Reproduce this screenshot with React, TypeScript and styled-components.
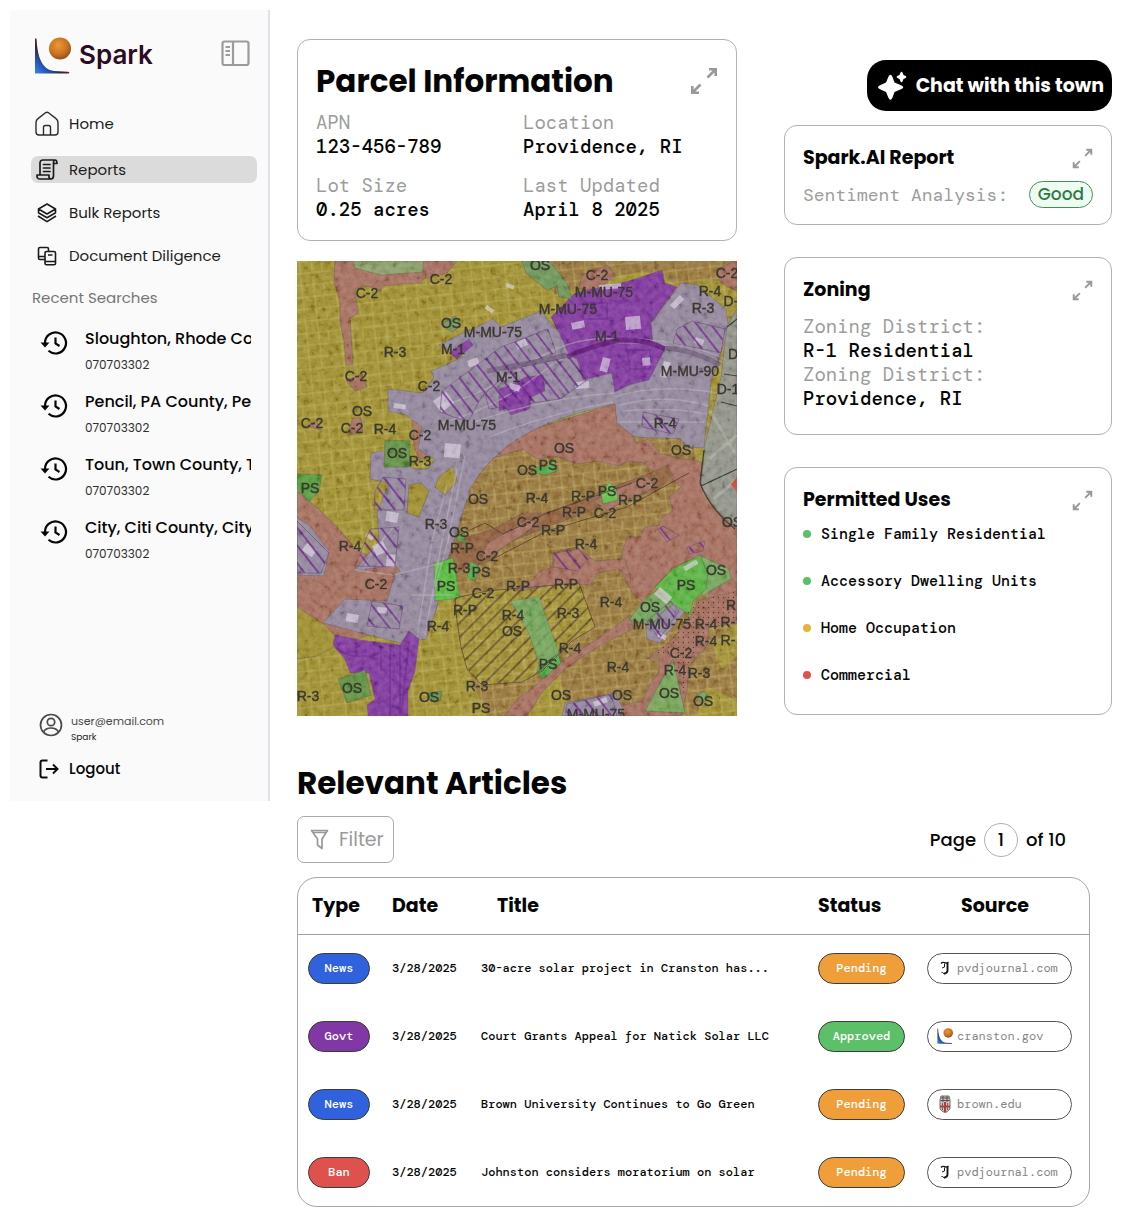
import React from "react";
import styled, { createGlobalStyle } from "styled-components";

const sans = `Poppins, Inter, sans-serif`;
const mono = `"DM Mono", "DejaVu Sans Mono", monospace`;

const GlobalStyle = createGlobalStyle`
  *, *::before, *::after { box-sizing: border-box; }
  body { margin: 0; background: #fff; color: #050505; font-family: ${sans}; }
  h1, h2, p, ul, dl, dd { margin: 0; padding: 0; }
  ul { list-style: none; }
  button { font: inherit; color: inherit; background: none; border: 0; padding: 0; cursor: pointer; }
  a { color: inherit; text-decoration: none; }
  svg { display: block; flex-shrink: 0; }
`;

const Page = styled.div`
  display: grid;
  grid-template-columns: 260px minmax(0, 1fr);
  align-items: start;
  column-gap: 27px;
  padding: 10px 18px 16px 10px;
`;

/* ---------- Sidebar ---------- */

const Sidebar = styled.aside`
  background: #fafafa;
  border-right: 2px solid #e2e1ea;
  padding: 26px 11px 20px 21px;
`;

const Brand = styled.div`
  display: flex;
  align-items: flex-start;
  justify-content: space-between;
  height: 38px;
  padding: 0 7px 0 3px;
`;

const BrandLink = styled.a`
  display: flex;
  align-items: center;
  gap: 8px;
  font: 600 26px/38px Inter, sans-serif;
  color: #2c0b24;
`;

const ToggleButton = styled.button`
  padding-top: 4px;
`;

const NavList = styled.ul`
  display: grid;
  gap: 16px;
  margin-top: 33px;
`;

const NavLink = styled.a<{ $active?: boolean; $tall?: boolean }>`
  display: flex;
  align-items: center;
  gap: 10px;
  height: ${(p) => (p.$tall ? 33 : 27)}px;
  padding-left: 4px;
  border-radius: 7px;
  background: ${(p) => (p.$active ? "#dbdbdb" : "transparent")};
  font-size: 15px;
  line-height: 24px;
  color: #1c1c1c;
`;

const IconSlot = styled.span`
  display: flex;
  justify-content: center;
  width: 24px;
`;

const RecentHeading = styled.h2`
  margin-top: 17px;
  padding-left: 1px;
  font-size: 15px;
  font-weight: 400;
  line-height: 24px;
  color: #757575;
`;

const RecentList = styled.ul`
  display: grid;
  gap: 19px;
  margin-top: 19px;
`;

const RecentLink = styled.a`
  display: flex;
  align-items: flex-start;
  gap: 17px;
  padding: 0 6px 0 9px;
`;

const RecentText = styled.span`
  display: grid;
  gap: 8px;
  min-width: 0;
`;

const RecentTitle = styled.span`
  overflow: hidden;
  white-space: nowrap;
  font-size: 16px;
  font-weight: 500;
  line-height: 20px;
`;

const RecentNumber = styled.span`
  font-size: 12px;
  line-height: 16px;
  color: #303030;
`;

const SidebarFooter = styled.div`
  display: grid;
  gap: 12px;
  margin-top: 151px;
  padding-left: 8px;
`;

const Account = styled.div`
  display: flex;
  align-items: flex-start;
  gap: 8px;
`;

const AccountText = styled.div<{ $small?: boolean }>`
  font-size: ${(p) => (p.$small ? 9 : 11)}px;
  line-height: 16px;
  color: ${(p) => (p.$small ? "#222" : "#484848")};
`;

const Logout = styled.button`
  display: flex;
  align-items: center;
  gap: 10px;
  font-size: 15px;
  font-weight: 500;
  line-height: 24px;
`;

/* ---------- Main panels ---------- */

const Main = styled.main`
  padding-top: 29px;
`;

const TopGrid = styled.section`
  display: grid;
  grid-template-columns: minmax(0, 440fr) minmax(0, 328fr);
  align-items: start;
  column-gap: 47px;
`;

const ParcelColumn = styled.div`
  display: grid;
  gap: 20px;
`;

const SideColumn = styled.div`
  display: flex;
  flex-direction: column;
  gap: 32px;
  padding-top: 21px;
`;

const ReportGroup = styled.div`
  display: flex;
  flex-direction: column;
  gap: 14px;
`;

const Card = styled.section<{ $bottom: number }>`
  border: 1px solid #b2b2b2;
  border-radius: 13px;
  padding: 18px 18px ${(p) => p.$bottom}px;
`;

const CardHead = styled.div<{ $large?: boolean }>`
  display: flex;
  align-items: center;
  justify-content: space-between;
  padding-top: ${(p) => (p.$large ? 3 : 0)}px;
`;

const BigTitle = styled.h1`
  font-size: 31px;
  font-weight: 700;
  line-height: 40px;
`;

const CardTitle = styled.h2`
  font-size: 19px;
  font-weight: 700;
  line-height: 28px;
`;

const Facts = styled.dl`
  display: grid;
  grid-template-columns: 1fr 1fr;
  gap: 15px 12px;
  margin-top: 10px;
`;

const Fact = styled.div`
  font: 400 19px/24px ${mono};
`;

const Label = styled.dt`
  color: #9c9c9c;
`;

const Value = styled.dd`
  font-weight: 500;
`;

const ZoningFacts = styled.dl`
  margin-top: 11px;
  font: 400 19px/24px ${mono};
`;

const Sentiment = styled.div`
  display: flex;
  align-items: center;
  justify-content: space-between;
  margin-top: 9px;
  font: 400 18px/26px ${mono};
  color: #9c9c9c;
`;

const Good = styled.span`
  border: 1px solid #3d9157;
  border-radius: 14px;
  padding: 0 8px;
  background: #effcf2;
  color: #2c7c43;
  font: 500 17px/25px ${sans};
`;

const ChatButton = styled.button`
  align-self: flex-end;
  display: flex;
  align-items: center;
  gap: 9px;
  height: 51px;
  padding: 0 8px 0 10px;
  border-radius: 19px;
  background: #000;
  color: #fff;
  font-size: 19px;
  font-weight: 700;
  white-space: nowrap;
`;

const UseList = styled.ul`
  display: grid;
  gap: 27px;
  margin-top: 10px;
`;

const Use = styled.li<{ $dot: string }>`
  display: flex;
  align-items: center;
  gap: 10px;
  font: 500 15px/20px ${mono};
  white-space: nowrap;
  &::before {
    content: "";
    width: 8px;
    height: 8px;
    border-radius: 50%;
    background: ${(p) => p.$dot};
  }
`;

const MapSvg = styled.svg`
  width: 100%;
  height: auto;
`;

/* ---------- Articles ---------- */

const Articles = styled.section`
  margin-top: 47px;
  padding-right: 22px;
`;

const Toolbar = styled.div`
  display: flex;
  align-items: center;
  justify-content: space-between;
  margin-top: 13px;
  padding-right: 24px;
`;

const FilterButton = styled.button`
  display: flex;
  align-items: center;
  gap: 10px;
  height: 47px;
  padding: 0 9px 0 12px;
  border: 1px solid #aaa;
  border-radius: 7px;
  font-size: 19px;
  color: #9a9a9a;
`;

const Pager = styled.label`
  display: flex;
  align-items: center;
  gap: 8px;
  font-size: 18px;
  font-weight: 500;
`;

const PageInput = styled.input`
  width: 34px;
  height: 34px;
  padding: 0;
  border: 1px solid #b2b2b2;
  border-radius: 50%;
  background: #fff;
  font: inherit;
  color: inherit;
  text-align: center;
`;

const TableFrame = styled.div`
  margin-top: 14px;
  border: 1px solid #a6a6a6;
  border-radius: 20px;
  overflow: hidden;
`;

const Table = styled.table`
  width: 100%;
  table-layout: fixed;
  border-collapse: collapse;
  font: 500 12px/16px ${mono};
  td {
    height: 68px;
    padding: 0 10px;
    white-space: nowrap;
  }
`;

const Col = styled.col<{ $w?: number }>`
  width: ${(p) => (p.$w ? `${p.$w}px` : "auto")};
`;

const Th = styled.th<{ $indent: number }>`
  height: 56px;
  padding: 0 0 0 ${(p) => p.$indent}px;
  border-bottom: 1px solid #a0a0a0;
  font: 700 19px/28px ${sans};
  text-align: left;
`;

const Pill = styled.span<{ $bg: string; $wide?: boolean }>`
  display: flex;
  align-items: center;
  justify-content: center;
  width: ${(p) => (p.$wide ? 87 : 62)}px;
  height: 31px;
  border: 1px solid #3c3c3c;
  border-radius: 16px;
  background: ${(p) => p.$bg};
  color: #fff;
`;

const SourceLink = styled.a`
  display: flex;
  align-items: center;
  gap: 4px;
  width: 145px;
  height: 31px;
  padding-left: 9px;
  border: 1px solid #555;
  border-radius: 16px;
  font-weight: 400;
  color: #858585;
`;

const SourceIcon = styled.span`
  display: flex;
  justify-content: center;
  width: 16px;
`;

/* ---------- Icons ---------- */

const SparkMark = ({ size, id }: { size: number; id: string }) => (
  <svg width={size} height={size} viewBox="0 0 37 37" aria-hidden="true">
    <defs>
      <radialGradient id={`${id}-sun`} cx=".42" cy=".36" r=".65">
        <stop offset="0" stopColor="#e99a37" />
        <stop offset=".6" stopColor="#cb7523" />
        <stop offset="1" stopColor="#955019" />
      </radialGradient>
      <linearGradient id={`${id}-arc`} x1="0" y1="1" x2=".52" y2=".48">
        <stop offset="0" stopColor="#3787f2" />
        <stop offset=".42" stopColor="#2553b0" />
        <stop offset=".75" stopColor="#33243e" />
        <stop offset="1" stopColor="#5c2937" />
      </linearGradient>
    </defs>
    <path d="M1 2C1.500 1 2.500 1 2.700 3C3.500 20 8 32.500 20 34L34 34.800Q36.500 35.500 34.500 36.500H1Z" fill={`url(#${id}-arc)`} />
    <circle cx="26" cy="11.500" r="11" fill={`url(#${id}-sun)`} />
  </svg>
);

const PanelIcon = () => (
  <svg width="29" height="27" viewBox="0 0 29 27" fill="none" stroke="#9b9b9b" strokeWidth="2.200" aria-hidden="true">
    <rect x="1.500" y="1.500" width="26" height="23.500" rx="2" />
    <path d="M12 2V25M4.500 7H9M4.500 11H9M4.500 15H9" />
  </svg>
);

const HomeIcon = () => (
  <svg width="24" height="25" viewBox="0 0 24 25" fill="none" stroke="#2b2b2b" strokeWidth="1.400" strokeLinejoin="round" aria-hidden="true">
    <path d="M1 11.500Q1 9 3 7.600L10.500 1.700Q12 .7 13.500 1.700L21 7.600Q23 9 23 11.500V21Q23 24 20 24H4Q1 24 1 21ZM8.500 24V16.500Q8.500 14.500 10.500 14.500H13.500Q15.500 14.500 15.500 16.500V24" />
  </svg>
);

const ScrollIcon = () => (
  <svg width="22" height="21" viewBox="0 0 22 21" fill="none" stroke="#1b1b1b" strokeWidth="1.700" strokeLinejoin="round" strokeLinecap="round" aria-hidden="true">
    <path d="M4 15.500V4Q4 1 7 1H19Q21 1 21 4.500H18M19 1Q17.500 1 17.500 4V16.500Q17.500 20 15 20H4Q1 20 1 17V16H13V17.500Q13 20 15 20M7.500 5.500H14M7.500 9H14M7.500 12.500H14" />
  </svg>
);

const StackIcon = () => (
  <svg width="20" height="20" viewBox="0 0 20 20" fill="none" stroke="#1b1b1b" strokeWidth="1.600" strokeLinejoin="round" aria-hidden="true">
    <path d="M10 1L18.500 6L10 11L1.500 6ZM1 9.500L10 14.700L19 9.500M1 13L10 18.600L19 13M1.500 6V9.500M18.500 6V9.500" />
  </svg>
);

const DocsIcon = () => (
  <svg width="20" height="20" viewBox="0 0 20 20" fill="none" stroke="#1b1b1b" strokeWidth="1.600" strokeLinejoin="round" aria-hidden="true">
    <path d="M7.500 13.500H3Q1.500 13.500 1.500 12V3Q1.500 1.500 3 1.500H10Q11.500 1.500 11.500 3V5M1.500 10.500H7.500M9.500 5.500H17Q18.500 5.500 18.500 7V17.500Q18.500 18.800 17 18.800H9.500Q8 18.800 8 17.500V7Q8 5.500 9.500 5.500ZM8 15.500H18.500M11 9H15.500" />
  </svg>
);

const HistoryIcon = () => (
  <svg width="28" height="28" viewBox="0 0 28 28" fill="none" stroke="#050505" strokeWidth="2.200" aria-hidden="true">
    <path d="M5 14A10.500 10.500 0 1 1 8.500 21.800M15.500 8.500V14.500L19.500 17" />
    <path d="M0.500 13.500H9.500L5 18.500Z" fill="#050505" stroke="none" />
  </svg>
);

const UserIcon = () => (
  <svg width="24" height="24" viewBox="0 0 24 24" fill="none" stroke="#484848" strokeWidth="1.700" aria-hidden="true">
    <circle cx="12" cy="12" r="10.500" />
    <circle cx="12" cy="9" r="3.700" />
    <path d="M4.500 19C6 16 9 15 12 15S18 16 19.500 19" />
  </svg>
);

const LogoutIcon = () => (
  <svg width="20" height="20" viewBox="0 0 20 20" fill="none" stroke="#0b0b0b" strokeWidth="2" aria-hidden="true">
    <path d="M8.500 1.500H3.500Q1.500 1.500 1.500 3.500V16.500Q1.500 18.500 3.500 18.500H8.500M7 10H18M14 5.500L18.500 10L14 14.500" />
  </svg>
);

const ExpandIcon = ({ size }: { size: number }) => (
  <svg width={size} height={size} viewBox="0 0 28 28" fill="none" stroke="#999" strokeWidth="2.600" aria-hidden="true">
    <path d="M17.500 10.500L25 3M19 2.300H25.700V9M10.500 17.500L3 25M2.300 19V25.700H9" />
  </svg>
);

const SparkleIcon = () => (
  <svg width="30" height="30" viewBox="0 0 30 30" fill="#fff" aria-hidden="true">
    <path d="M11.300 6Q13.500 1.500 15.500 6L17.500 11.500L24 14.300Q28.500 16.300 24 18.300L17.500 21L15.500 26.500Q13.500 31 11.300 26.500L9 21L3 18.300Q-1 16.300 3 14.300L9 11.500Z" />
    <path d="M23.300 2Q24.500 -.6 25.700 2L26.500 4L28.200 4.800Q30.500 6 28.200 7.200L26.500 8L25.700 10Q24.500 12.600 23.300 10L22.500 8L20.800 7.200Q18.500 6 20.800 4.800L22.500 4Z" />
  </svg>
);

const FilterIcon = () => (
  <svg width="19" height="22" viewBox="0 0 19 22" fill="none" stroke="#999" strokeWidth="1.700" strokeLinejoin="round" aria-hidden="true">
    <path d="M1.500 1.500H17.500L12 10V19.500L7.500 16V10ZM3 3.500H16" />
  </svg>
);

const JournalIcon = () => (
  <svg width="10" height="14" viewBox="0 0 10 14" fill="none" stroke="#161616" aria-hidden="true">
    <path d="M1 2.500Q2.500 .8 4.500 1.700Q6.500 2.600 8.500 1" strokeWidth="1.400" />
    <path d="M7.500 2V9.500Q7.500 12 4 12.800" strokeWidth="1.900" />
    <path d="M4.500 2.500V6L2 7M1.500 11.500Q2.500 11 4 12.800" strokeWidth="1" />
  </svg>
);

const CrestIcon = () => (
  <svg width="12" height="18" viewBox="0 0 12 18" aria-hidden="true">
    <path d="M2 1H10L11 5V14Q8 17.500 6 17.500Q3 17 1 14V5Z" fill="#c8c4c4" stroke="#77706e" />
    <path d="M2 3H10M1.500 5.500H10.500M4 1V7M8 1V7" stroke="#565151" />
    <path d="M6 7V17M1 11.500H11" stroke="#bd3838" strokeWidth="2" />
    <path d="M3.500 8V15M8.500 8V15" stroke="#7b6262" />
  </svg>
);

/* ---------- Zoning map ---------- */

type MapLabel = [string, number, number];

const mapLabels: MapLabel[] = [
  ["OS", 243, 4], ["C-2", 300, 14], ["C-2", 430, 12], ["C-2", 144, 18], ["C-2", 70, 32], ["R-4", 413, 30],
  ["D-", 434, 40], ["M-MU-75", 307, 31], ["M-MU-75", 271, 48], ["R-3", 406, 47], ["OS", 154, 62],
  ["M-MU-75", 196, 71], ["M-1", 156, 88], ["M-1", 310, 75], ["R-3", 98, 91], ["C-2", 59, 115],
  ["M-1", 211, 116], ["C-2", 132, 125], ["M-MU-90", 393, 110], ["D", 436, 93], ["D-1", 431, 128],
  ["OS", 65, 150], ["C-2", 15, 162], ["C-2", 55, 167], ["R-4", 88, 168], ["M-MU-75", 170, 164],
  ["C-2", 123, 174], ["R-4", 368, 162], ["OS", 100, 192], ["R-3", 123, 200], ["OS", 267, 187],
  ["OS", 384, 189], ["OS", 230, 209], ["PS", 251, 204], ["PS", 13, 227], ["C-2", 350, 222],
  ["OS", 181, 238], ["R-4", 240, 237], ["R-P", 286, 235], ["PS", 310, 230], ["R-P", 333, 239],
  ["R-3", 139, 263], ["OS", 162, 271], ["C-2", 231, 261], ["R-P", 277, 251], ["C-2", 308, 252],
  ["R-P", 256, 269], ["OS", 435, 261], ["R-4", 53, 285], ["R-P", 165, 287], ["C-2", 190, 295],
  ["R-4", 289, 283], ["R-3", 162, 307], ["PS", 184, 311], ["C-2", 79, 323], ["PS", 149, 325],
  ["C-2", 186, 332], ["R-P", 221, 325], ["R-P", 269, 323], ["PS", 389, 324], ["OS", 419, 309],
  ["R-P", 168, 349], ["R-4", 216, 354], ["R-3", 271, 352], ["R-4", 314, 341], ["OS", 353, 346],
  ["R-4", 141, 365], ["OS", 215, 370], ["M-MU-75", 365, 363], ["R-4", 409, 363], ["R", 434, 344],
  ["R-", 431, 361], ["R-4", 409, 380], ["R-", 431, 379], ["R-4", 273, 387], ["C-2", 384, 392],
  ["PS", 251, 403], ["R-4", 321, 406], ["R-4", 378, 409], ["R-3", 402, 412], ["R-3", 11, 435],
  ["OS", 55, 427], ["OS", 132, 436], ["R-3", 180, 425], ["PS", 184, 447], ["OS", 264, 434],
  ["OS", 325, 434], ["OS", 372, 432], ["OS", 406, 440], ["M-MU-75", 299, 453],
];

const olive = "#9d8d32";
const tan = "#94743c";
const salmon = "#a36e5e";
const rust = "#8f6140";
const lilac = "#91859a";
const violet = "#7f3a9c";

const groundZones: [string, string][] = [
  [tan, "M160 0H440V62L402 40L370 18L345 10L290 22L262 35L215 0Z"],
  [olive, "M160 0H225L250 30L262 38L252 60L210 68L188 58L160 66Z"],
  [tan, "M162 455L164 420L150 405L157 330L146 300L166 238Q188 188 230 172L318 146L330 172L395 182L412 240L440 268V455Z"],
  [olive, "M125 345L158 342L162 372L170 395L175 420L190 455H115Z"],
  [olive, "M158 337L190 330L282 322L298 366L275 380L245 410L225 421L185 424L170 408L164 386L160 360Z"],
  [olive, "M225 455L246 425L262 415L275 455ZM400 18L424 20L440 32V55H425L402 38ZM400 455L410 425L440 440V455ZM415 385L440 362V395L425 408Z"],
];

const zones: [string, string][] = [
  [salmon, "M38 0H160L150 12L126 18L124 22L104 23L86 25L84 30L70 25L58 28L61 52L53 58L56 104L49 104L47 80L43 62V40L37 22V10Z"],
  [salmon, "M49 119L65 113L70 126L58 130ZM126 128L137 124L140 134L130 138ZM52 168L56 157L64 157L66 170L54 174ZM10 165L20 160L24 169ZM115 160L124 155L125 170L132 178L129 196L122 199L117 185Z"],
  [salmon, "M178 200Q200 180 230 170L318 143L320 160L334 168L338 182L352 178L362 192L384 198L404 200L410 238L440 268V345L412 335L403 296L376 306L345 340L334 330L325 312V292L330 276L344 276L348 266L362 264L366 255L376 250L372 236L384 226L368 212L352 208L348 202L330 200L322 205L300 200L280 203L258 195L240 198L226 188L200 196Z"],
  [salmon, "M218 328L237 318L240 312L256 306L258 292L282 288L298 300L328 298L334 318L322 308L300 312L294 324L268 322L222 330Z"],
  [rust, "M158 285L170 276L196 268L226 252L250 252L300 232L345 215L370 205L376 214L360 230L320 240L250 266L210 282L192 300L176 306L150 315L152 295Z"],
  [salmon, "M190 283L230 258L242 262L218 279L184 300ZM296 240L350 215L358 226L310 249Z"],
  [salmon, "M0 230L22 248L40 266L61 290L112 310L122 334L114 362L0 395Z"],
  [olive, "M0 346L28 364L44 382L20 395L0 398Z"],
  [salmon, "M282 28L285 14L310 4L318 15L298 30ZM420 8L438 0H440V30L424 22Z"],
  [salmon, "M208 455L220 438L237 426L262 402L300 378L334 354L336 368L304 384L270 406L246 430L230 455Z"],
  [salmon, "M398 350L400 340L440 330V362L412 366L410 385L392 405L390 430L384 455H315L318 446L345 440L355 420L362 412V398L350 398L374 380Z"],
  [lilac, "M91 128L126 132L137 116L134 110L166 96L142 84L166 72L180 66L196 58L204 66L244 50L262 72L300 40L354 62L384 22L400 24L429 48L432 68L414 120L407 187L390 186L384 178L338 176L320 162L318 143Q248 158 218 180Q188 200 173 228L162 264L148 306L140 346L129 378L103 382L26 362L48 338L90 340L98 312L106 314L98 304L57 310L82 280L80 252L92 222L73 218L74 192L86 190L118 208L131 208L138 198L121 188L125 166L109 154L91 150Z"],
  [lilac, "M0 257L12 264L32 290L27 315L0 314ZM348 356L378 338L388 350L363 382L350 378ZM268 442L318 432L326 448L323 455H265Z"],
  [olive, "M138 226L142 216L156 205L160 220L148 234ZM112 224L124 222L132 230L122 256L110 252Z"],
  [violet, "M254 56L278 32L332 20L365 9L368 22L380 26L354 62L356 82L368 88L352 119L332 124L318 131L315 112L286 119L280 98L272 94L266 80Z"],
  [violet, "M152 92L172 78L176 84L160 98ZM202 128L214 124L229 116L246 114L248 130L234 136L232 148L214 154L210 148L202 150Z"],
  [violet, "M38 374L64 379L103 384L112 370L122 378L118 410L111 430V455H71L70 444L78 438L72 412L53 412L48 398L36 384Z"],
  ["#8b9d68", "M56 0H126V11L84 14L58 7Z"],
  ["#6d9458", "M225 0H252L270 22L275 38L262 36L260 25L250 29L229 12ZM146 62L158 55L164 64L156 71L150 68Z"],
  ["#5f8f43", "M88 179L113 180L113 206L87 206ZM41 418L68 409L74 434L50 442ZM160 272L167 270L169 282L160 280ZM131 432L145 430L143 440H133ZM220 341L226 336V350L218 347Z"],
  ["#549b3c", "M0 213L25 214L22 230L12 241L0 228Z"],
  ["#57bc3f", "M137 302L156 297L163 337L138 340Z"],
  ["#50a747", "M238 206L250 205L258 199L260 210L248 214L238 212ZM174 300L182 306L178 320L170 316ZM243 400L261 390L264 402L246 418L240 410Z"],
  ["#63bf4c", "M304 232L312 221L319 227L321 239L306 243Z"],
  ["#73a45b", "M214 340L242 336L251 362L262 392L243 405L232 372ZM332 359L345 342L358 330L376 344L364 352L355 364ZM402 294L432 308L434 318L405 335Z"],
  ["#5bb043", "M358 326L376 308L403 294L411 313L409 328L396 340L393 354L377 344Z"],
  ["#76a258", "M376 398L388 452L348 450ZM400 434L408 430L412 438L404 443Z"],
  ["#909288", "M430 65L440 48V268L421 250L404 225L408 184L418 141L424 117Z"],
];

const hatched = [
  "M145 130L204 86L251 68L259 92L215 107L184 137L171 161L143 151Z",
  "M188 132L216 108L281 94L289 120L263 138L192 148Z",
  "M78 230L86 216L109 218L107 249L77 249Z",
  "M0 260L32 292L24 312H0Z",
  "M73 268L102 266L98 306L58 305Z",
  "M75 340L106 345L102 368L70 365Z",
  "M380 68L395 60L428 68L424 92L376 82Z",
  "M346 151L382 158L376 173L345 166Z",
  "M350 360L374 340L382 350L362 378Z",
  "M270 443L314 433L320 455H268Z",
  "M256 292L280 286L291 298L281 310L256 306Z",
  "M361 268L366 265L382 274L370 281ZM390 286L408 280L406 290L392 293Z",
];

const roads = [
  "M144 162Q198 148 244 112T326 82Q382 80 423 106",
  "M140 146Q186 134 230 104T318 78Q378 76 428 98",
  "M318 136Q360 122 420 132M322 144Q370 132 412 145M326 150Q370 146 410 153M320 161H407",
  "M150 224L135 280L120 376M160 208L144 285L128 374M168 195L151 280L132 350",
  "M57 309L96 314L145 302M114 334H157M96 267Q70 295 66 310",
  "M177 161Q247 137 317 132M193 176Q249 153 316 141",
];

const roofs: [number, number, number, number, number][] = [
  [136, 140, 16, 14, -35], [148, 182, 16, 14, 5], [170, 100, 11, 7, -20], [218, 82, 11, 7, -25],
  [274, 62, 13, 7, -12], [328, 56, 15, 13, -5], [345, 97, 8, 8, -5], [306, 96, 8, 14, 15],
  [278, 121, 14, 7, -4], [373, 44, 14, 6, -45], [399, 76, 9, 6, 20], [10, 282, 12, 9, 35],
  [75, 285, 12, 11, -25], [90, 250, 12, 10, 10], [90, 293, 9, 13, 5], [50, 352, 12, 8, 10],
  [80, 346, 10, 6, 5], [363, 326, 16, 9, 40], [386, 306, 15, 5, -30], [362, 371, 9, 5, 25],
  [296, 441, 14, 5, -20], [302, 24, 22, 5, -5], [213, 122, 11, 6, 15], [97, 142, 12, 5, 8],
  [190, 44, 9, 4, 35], [210, 22, 8, 4, 20], [70, 272, 8, 4, 30], [367, 100, 7, 16, 15],
];

const ZoningMap = () => (
  <MapSvg viewBox="0 0 440 455" role="img" aria-label="Zoning map of Providence">
    <defs>
      <pattern id="blocks" width="34" height="24" patternUnits="userSpaceOnUse" patternTransform="rotate(-6)">
        <path d="M0 1H34M2 0V24M14 1V24M24 1V13M0 13H34" fill="none" stroke="#d0c468" strokeWidth="1" opacity=".45" />
        <path d="M5 4H8M17 5H20M28 8H31M17 18H20M5 18H8M27 17H31" stroke="#5f5222" strokeWidth="2" opacity=".22" />
      </pattern>
      <pattern id="lots" width="26" height="19" patternUnits="userSpaceOnUse" patternTransform="rotate(18)">
        <path d="M0 1H26M1 0V19M15 1V19" fill="none" stroke="#cdb272" strokeWidth="1" opacity=".3" />
      </pattern>
      <pattern id="violetHatch" width="11" height="11" patternUnits="userSpaceOnUse" patternTransform="rotate(-38)">
        <path d="M1 0V11" stroke="#6a2588" strokeWidth="1.600" />
      </pattern>
      <pattern id="campusHatch" width="10" height="10" patternUnits="userSpaceOnUse" patternTransform="rotate(45)">
        <path d="M1 0V10" stroke="#51382f" strokeWidth="1.300" />
      </pattern>
      <pattern id="dots" width="5" height="5" patternUnits="userSpaceOnUse">
        <circle cx="1.500" cy="1.500" r=".7" fill="#51312c" />
      </pattern>
      <filter id="aerial" x="0" y="0" width="100%" height="100%">
        <feTurbulence type="fractalNoise" baseFrequency=".16" numOctaves="5" seed="8" />
        <feColorMatrix type="saturate" values="0" />
        <feComponentTransfer>
          <feFuncR type="linear" slope="2" intercept="-.56" />
          <feFuncG type="linear" slope="2" intercept="-.56" />
          <feFuncB type="linear" slope="2" intercept="-.56" />
          <feFuncA type="linear" slope="0" intercept="1" />
        </feComponentTransfer>
      </filter>
      <clipPath id="mapEdge"><rect width="440" height="455" /></clipPath>
    </defs>
    <g clipPath="url(#mapEdge)">
      <rect width="440" height="455" fill={olive} />
      {groundZones.map(([fill, d]) => <path key={d} d={d} fill={fill} />)}
      <rect width="440" height="455" fill="url(#blocks)" />
      <path d={groundZones[2][1]} fill="url(#lots)" />
      {zones.map(([fill, d]) => <path key={d} d={d} fill={fill} stroke="#554e48" strokeWidth=".4" />)}
      {roads.map((d) => <path key={d} d={d} fill="none" stroke="#b9afb9" strokeWidth="1.500" opacity=".5" />)}
      <path d="M270 96Q290 86 322 79Q350 78 368 88" fill="none" stroke="#62207a" strokeWidth="5" />
      <path d="M368 87Q395 88 423 104M190 110Q235 102 270 94" fill="none" stroke="#72617a" strokeWidth="5" />
      <path d="M84 384V410M93 384V455M103 384V455M112 380L104 455M41 388Q58 402 90 390M286 42H310V58H286ZM330 89H353V108H333Z" fill="none" stroke="#5e2386" strokeWidth="2" opacity=".5" />
      {roofs.map(([x, y, w, h, turn]) => (
        <rect key={`${x}-${y}`} x={x} y={y} width={w} height={h} fill="#dcd3e2" opacity=".65" transform={`rotate(${turn} ${x} ${y})`} />
      ))}
      {hatched.map((d) => <path key={d} d={d} fill="url(#violetHatch)" stroke="#6a4a75" strokeWidth=".7" />)}
      <path d={groundZones[4][1]} fill="url(#campusHatch)" stroke="#564127" strokeWidth=".8" />
      <path d="M214 340L242 336L251 362L262 392L243 405L232 372Z" fill="#73a45b" opacity=".8" />
      <path d="M158 276L188 262L206 273L250 252L335 222M192 300L250 270L330 246L392 212" fill="none" stroke="#4d3423" strokeWidth=".8" />
      <path d="M398 340L440 330V360L412 365L392 405L390 450L377 390L350 398L374 380Z" fill="url(#dots)" />
      <path d="M407 189L403 222Q413 248 438 268M404 225L440 208M430 66L440 58M424 141L440 145M427 113L440 115" fill="none" stroke="#34352f" strokeWidth="1.200" />
      <path d="M417 238L440 218M413 150L438 192M412 198L440 174" stroke="#b4b6aa" strokeWidth="3" opacity=".5" />
      <path d="M434 223L440 216V232Z" fill="#c64b3c" />
      <rect width="440" height="455" filter="url(#aerial)" opacity=".4" style={{ mixBlendMode: "soft-light" }} />
      <g fill="#3a382f" fontFamily="Liberation Sans, Arial, sans-serif" fontSize="14" textAnchor="middle" stroke="#3a382f" strokeWidth=".4">
        {mapLabels.map(([text, x, y]) => (
          <text key={`${text}-${x}-${y}`} x={x} y={y + 5}>{text}</text>
        ))}
      </g>
    </g>
  </MapSvg>
);

/* ---------- Data ---------- */

const navItems = [
  { label: "Home", icon: <HomeIcon />, tall: true },
  { label: "Reports", icon: <ScrollIcon />, active: true },
  { label: "Bulk Reports", icon: <StackIcon /> },
  { label: "Document Diligence", icon: <DocsIcon /> },
];

const recents = ["Sloughton, Rhode County", "Pencil, PA County, Penn", "Toun, Town County, Town", "City, Citi County, City"];

const facts = [
  ["APN", "123-456-789"],
  ["Location", "Providence, RI"],
  ["Lot Size", "0.25 acres"],
  ["Last Updated", "April 8 2025"],
];

const uses = [
  ["Single Family Residential", "#5cc068"],
  ["Accessory Dwelling Units", "#5cc068"],
  ["Home Occupation", "#e8b23c"],
  ["Commercial", "#e0524d"],
];

const typeColors: Record<string, string> = { News: "#2f62dc", Govt: "#8137a4", Ban: "#df514d" };
const statusColors: Record<string, string> = { Pending: "#f09e3a", Approved: "#5cc069" };

const articles = [
  { type: "News", title: "30-acre solar project in Cranston has...", status: "Pending", source: "pvdjournal.com" },
  { type: "Govt", title: "Court Grants Appeal for Natick Solar LLC", status: "Approved", source: "cranston.gov" },
  { type: "News", title: "Brown University Continues to Go Green", status: "Pending", source: "brown.edu" },
  { type: "Ban", title: "Johnston considers moratorium on solar", status: "Pending", source: "pvdjournal.com" },
];

const sourceIcons: Record<string, React.ReactNode> = {
  "pvdjournal.com": <JournalIcon />,
  "cranston.gov": <SparkMark size={16} id="cranston" />,
  "brown.edu": <CrestIcon />,
};

export default function App() {
  return (
    <>
      <GlobalStyle />
      <Page>
        <Sidebar>
          <Brand>
            <BrandLink href="#"><SparkMark size={37} id="brand" />Spark</BrandLink>
            <ToggleButton aria-label="Toggle sidebar"><PanelIcon /></ToggleButton>
          </Brand>
          <nav>
            <NavList>
              {navItems.map((item) => (
                <li key={item.label}>
                  <NavLink href="#" $active={item.active} $tall={item.tall}>
                    <IconSlot>{item.icon}</IconSlot>
                    {item.label}
                  </NavLink>
                </li>
              ))}
            </NavList>
          </nav>
          <RecentHeading>Recent Searches</RecentHeading>
          <RecentList>
            {recents.map((name) => (
              <li key={name}>
                <RecentLink href="#">
                  <HistoryIcon />
                  <RecentText>
                    <RecentTitle>{name}</RecentTitle>
                    <RecentNumber>070703302</RecentNumber>
                  </RecentText>
                </RecentLink>
              </li>
            ))}
          </RecentList>
          <SidebarFooter>
            <Account>
              <UserIcon />
              <div>
                <AccountText>user@email.com</AccountText>
                <AccountText $small>Spark</AccountText>
              </div>
            </Account>
            <Logout><LogoutIcon />Logout</Logout>
          </SidebarFooter>
        </Sidebar>

        <Main>
          <TopGrid>
            <ParcelColumn>
              <Card $bottom={18}>
                <CardHead $large>
                  <BigTitle>Parcel Information</BigTitle>
                  <button aria-label="Expand parcel information"><ExpandIcon size={28} /></button>
                </CardHead>
                <Facts>
                  {facts.map(([label, value]) => (
                    <Fact key={label}>
                      <Label>{label}</Label>
                      <Value>{value}</Value>
                    </Fact>
                  ))}
                </Facts>
              </Card>
              <ZoningMap />
            </ParcelColumn>

            <SideColumn>
              <ReportGroup>
                <ChatButton><SparkleIcon />Chat with this town</ChatButton>
                <Card $bottom={16}>
                  <CardHead>
                    <CardTitle>Spark.AI Report</CardTitle>
                    <button aria-label="Expand report"><ExpandIcon size={21} /></button>
                  </CardHead>
                  <Sentiment>Sentiment Analysis: <Good>Good</Good></Sentiment>
                </Card>
              </ReportGroup>
              <Card $bottom={23}>
                <CardHead>
                  <CardTitle>Zoning</CardTitle>
                  <button aria-label="Expand zoning"><ExpandIcon size={21} /></button>
                </CardHead>
                <ZoningFacts>
                  <Label>Zoning District:</Label>
                  <Value>R-1 Residential</Value>
                  <Label>Zoning District:</Label>
                  <Value>Providence, RI</Value>
                </ZoningFacts>
              </Card>
              <Card $bottom={29}>
                <CardHead>
                  <CardTitle>Permitted Uses</CardTitle>
                  <button aria-label="Expand permitted uses"><ExpandIcon size={21} /></button>
                </CardHead>
                <UseList>
                  {uses.map(([name, color]) => <Use key={name} $dot={color}>{name}</Use>)}
                </UseList>
              </Card>
            </SideColumn>
          </TopGrid>

          <Articles>
            <BigTitle as="h2">Relevant Articles</BigTitle>
            <Toolbar>
              <FilterButton><FilterIcon />Filter</FilterButton>
              <Pager>Page <PageInput defaultValue="1" aria-label="Page number" /> of 10</Pager>
            </Toolbar>
            <TableFrame>
              <Table>
                <colgroup>
                  <Col $w={84} />
                  <Col $w={89} />
                  <Col />
                  <Col $w={109} />
                  <Col $w={172} />
                </colgroup>
                <thead>
                  <tr>
                    <Th $indent={14}>Type</Th>
                    <Th $indent={10}>Date</Th>
                    <Th $indent={26}>Title</Th>
                    <Th $indent={10}>Status</Th>
                    <Th $indent={44}>Source</Th>
                  </tr>
                </thead>
                <tbody>
                  {articles.map((a) => (
                    <tr key={a.title}>
                      <td><Pill $bg={typeColors[a.type]}>{a.type}</Pill></td>
                      <td>3/28/2025</td>
                      <td>{a.title}</td>
                      <td><Pill $bg={statusColors[a.status]} $wide>{a.status}</Pill></td>
                      <td>
                        <SourceLink href="#">
                          <SourceIcon>{sourceIcons[a.source]}</SourceIcon>
                          {a.source}
                        </SourceLink>
                      </td>
                    </tr>
                  ))}
                </tbody>
              </Table>
            </TableFrame>
          </Articles>
        </Main>
      </Page>
    </>
  );
}
